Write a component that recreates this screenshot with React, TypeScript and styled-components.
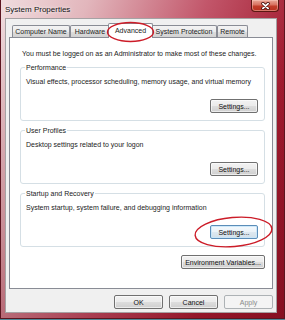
import React from "react";
import styled, { createGlobalStyle, css } from "styled-components";

const tabs = [
  { label: "Computer Name", width: 58 },
  { label: "Hardware", width: 40 },
  { label: "Advanced", width: 41, active: true },
  { label: "System Protection", width: 66 },
  { label: "Remote", width: 31 },
];

const groups = [
  {
    title: "Performance",
    text: "Visual effects, processor scheduling, memory usage, and virtual memory",
  },
  { title: "User Profiles", text: "Desktop settings related to your logon" },
  {
    title: "Startup and Recovery",
    text: "System startup, system failure, and debugging information",
    focus: true,
  },
];

const App = () => {
  return (
    <>
      <GlobalStyle />
      <Window>
        <TitleBar>
          <Title>System Properties</Title>
          <CloseBtn type="button" aria-label="Close">
            <svg width="9" height="8" viewBox="-4.5 -4 9 8">
              <path d="M-2.6,-2.4 L2.6,2.4 M2.6,-2.4 L-2.6,2.4" stroke="#4a1410" strokeWidth="3.4" strokeLinecap="round" />
              <path d="M-2.6,-2.4 L2.6,2.4 M2.6,-2.4 L-2.6,2.4" stroke="#ffffff" strokeWidth="1.8" strokeLinecap="round" />
            </svg>
          </CloseBtn>
        </TitleBar>

        <Client>
          <TabStrip>
            {tabs.map((tab) => (
              <Tab key={tab.label} $width={tab.width} $active={tab.active}>
                {tab.label}
              </Tab>
            ))}
          </TabStrip>

          <TabPanel>
            <Notice>You must be logged on as an Administrator to make most of these changes.</Notice>
            {groups.map((group) => (
              <Group key={group.title}>
                <GroupLabel>{group.title}</GroupLabel>
                <GroupText>{group.text}</GroupText>
                <ButtonRow>
                  <Button type="button" $width={48} $variant={group.focus ? "focus" : "normal"}>
                    Settings...
                  </Button>
                </ButtonRow>
              </Group>
            ))}
            <EnvRow>
              <Button type="button" $width={84}>
                Environment Variables...
              </Button>
            </EnvRow>
          </TabPanel>

          <DialogButtons>
            <Button type="button" $width={49}>OK</Button>
            <Button type="button" $width={49}>Cancel</Button>
            <Button type="button" $width={49} $variant="disabled" disabled>
              Apply
            </Button>
          </DialogButtons>
        </Client>

        {/* red marker rings drawn over the screenshot */}
        <Marks viewBox="0 0 285 319" width="285" height="319">
          <ellipse cx="130.5" cy="32" rx="23" ry="9.5" fill="none" stroke="#cc1c28" strokeWidth="1.4" />
          <ellipse
            cx="233.5"
            cy="232"
            rx="38.5"
            ry="14.5"
            fill="none"
            stroke="#cc1c28"
            strokeWidth="1.4"
            transform="rotate(-5 233.5 232)"
          />
        </Marks>
      </Window>
    </>
  );
};

export default App;

const GlobalStyle = createGlobalStyle`
  html, body {
    margin: 0;
    padding: 0;
    background: #4f8898;
  }
  body {
    font-family: "Liberation Sans", Arial, sans-serif;
    font-size: 7px;
    line-height: 9px;
    color: #1b1b1b;
  }
  * {
    box-sizing: border-box;
  }
`;

const Window = styled.div`
  position: relative;
  display: flex;
  flex-direction: column;
  width: 285px;
  height: 319px;
  padding: 0 7px 5px 4px;
  border: 1px solid #5c1520;
  border-top: none;
  background:
    linear-gradient(to bottom, transparent 18px, rgba(120, 10, 28, 0.35) 100%),
    linear-gradient(110deg, #f0dcde 0%, #e2b6bc 22%, #c2566a 52%, #a21c30 78%, #8e1224 100%);
`;

const TitleBar = styled.div`
  display: flex;
  align-items: flex-start;
  height: 18px;
  flex-shrink: 0;
`;

const Title = styled.span`
  padding-top: 5px;
  font-size: 8px;
  line-height: 10px;
  color: #111;
  text-shadow: 0 0 3px rgba(255, 255, 255, 0.9), 0 0 6px rgba(255, 255, 255, 0.6);
`;

const CloseBtn = styled.button`
  display: flex;
  align-items: center;
  justify-content: center;
  margin-left: auto;
  margin-right: -2px;
  width: 28px;
  height: 12px;
  padding: 0;
  border: 1px solid #5a1812;
  border-top: none;
  border-radius: 0 0 4px 4px;
  background: linear-gradient(to bottom, #eaa898 0%, #d8705e 45%, #c23e2a 55%, #b8301e 100%);
  box-shadow: inset 0 0 0 1px rgba(255, 210, 200, 0.45);
`;

const Client = styled.div`
  flex: 1;
  display: flex;
  flex-direction: column;
  padding: 4px 3px 3px 3px;
  background: #f0f0f0;
  border: 1px solid #a6a2a4;
`;

const TabStrip = styled.div`
  position: relative;
  z-index: 1;
  display: flex;
  align-items: flex-end;
  height: 14px;
  padding-left: 3px;
`;

const Tab = styled.div<{ $width: number; $active?: boolean }>`
  display: flex;
  align-items: center;
  justify-content: center;
  width: ${({ $width }) => $width}px;
  height: 12px;
  border: 1px solid #898c95;
  border-bottom: none;
  border-radius: 2px 2px 0 0;
  background: linear-gradient(to bottom, #f3f3f3 0%, #ebebeb 50%, #dddddd 51%, #d2d2d2 100%);
  white-space: nowrap;
  color: #1b1b1b;

  ${({ $active, $width }) =>
    $active &&
    css`
      position: relative;
      z-index: 2;
      width: ${$width + 4}px;
      height: 15px;
      margin: 0 -2px -1px;
      padding-bottom: 1px;
      background: #ffffff;
    `}
`;

const TabPanel = styled.div`
  flex: 1;
  display: flex;
  flex-direction: column;
  padding: 11px 7px 0 10px;
  background: #ffffff;
  border: 1px solid #898c95;
`;

const Notice = styled.p`
  margin: 0 0 5px;
  padding-left: 2px;
  white-space: nowrap;
`;

const Group = styled.fieldset`
  margin: 0 0 5px;
  padding: 5px 6px 7px 5px;
  min-inline-size: 0;
  border: 1px solid #d5dfe5;
  border-radius: 3px;
`;

const GroupLabel = styled.legend`
  padding: 0 1px;
  margin-left: -1px;
  font-size: 7px;
  line-height: 9px;
  color: #1b1b1b;
`;

const GroupText = styled.p`
  margin: 0;
  white-space: nowrap;
`;

const ButtonRow = styled.div`
  display: flex;
  justify-content: flex-end;
  margin-top: 13px;
`;

const EnvRow = styled.div`
  display: flex;
  justify-content: flex-end;
  margin-top: 3px;
`;

const DialogButtons = styled.div`
  display: flex;
  justify-content: flex-end;
  gap: 6px;
  margin-top: 6px;
`;

type Variant = "normal" | "focus" | "disabled";

const Button = styled.button<{ $width: number; $variant?: Variant }>`
  display: flex;
  align-items: center;
  justify-content: center;
  width: ${({ $width }) => $width}px;
  height: 14px;
  padding: 0;
  font-family: "Liberation Sans", Arial, sans-serif;
  font-size: 7px;
  line-height: 9px;
  color: #111;
  white-space: nowrap;
  border: 1px solid #707070;
  border-radius: 2px;
  background: linear-gradient(to bottom, #f2f2f2 0%, #ebebeb 50%, #dddddd 51%, #cfcfcf 100%);
  box-shadow: inset 0 0 0 1px rgba(255, 255, 255, 0.6);

  ${({ $variant }) =>
    $variant === "focus" &&
    css`
      border-color: #5b8db8;
      background: linear-gradient(to bottom, #f4f9fc 0%, #eaf2f8 50%, #dde8f0 51%, #d2dfe9 100%);
      box-shadow: inset 0 0 0 1px rgba(200, 230, 250, 0.9);
    `}

  ${({ $variant }) =>
    $variant === "disabled" &&
    css`
      color: #8a8a8a;
      border-color: #adb2b5;
      background: #f4f4f4;
      box-shadow: none;
    `}
`;

const Marks = styled.svg`
  position: absolute;
  top: 0;
  left: -1px;
  pointer-events: none;
  z-index: 5;
`;
